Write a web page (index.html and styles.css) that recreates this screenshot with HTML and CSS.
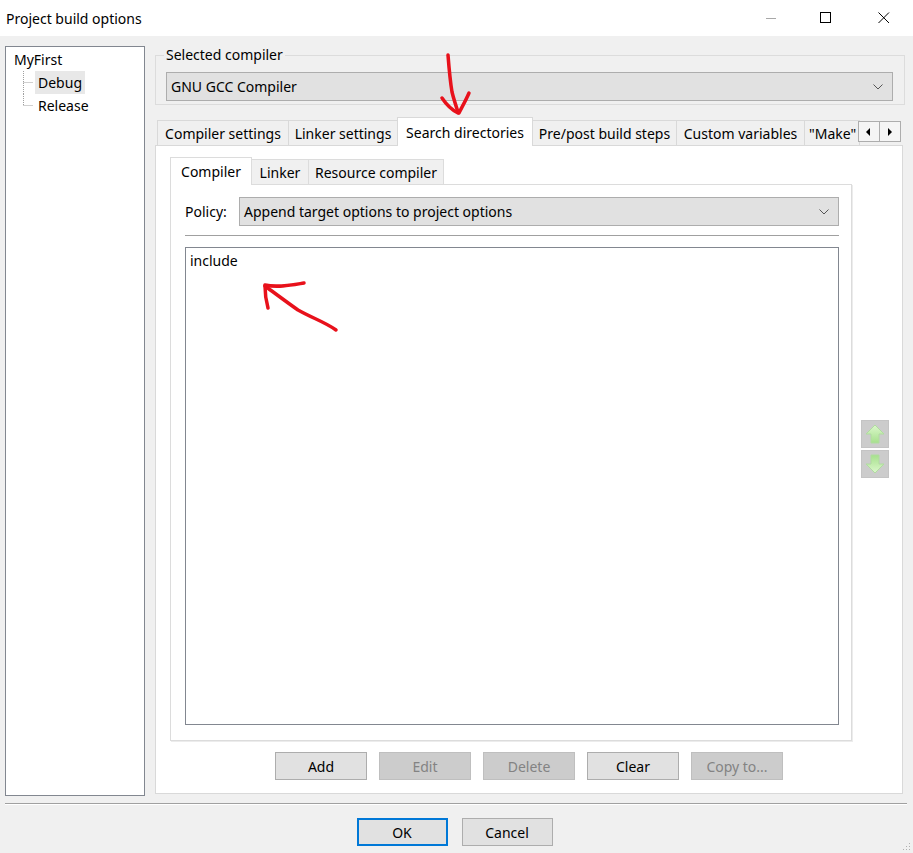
FILE: index.html
```html
<!DOCTYPE html>
<html>
<head>
<meta charset="utf-8">
<title>Project build options</title>
<link rel="stylesheet" href="styles.css">
</head>
<body>
<div class="titlebar">
  <span class="title">Project build options</span>
  <div class="controls">
    <span class="ctl"><svg width="12" height="12" viewBox="0 0 12 12"><line x1="1" y1="6.5" x2="11" y2="6.5" stroke="#a8a8a8" stroke-width="1"/></svg></span>
    <span class="ctl"><svg width="12" height="12" viewBox="0 0 12 12"><rect x="0.5" y="0.5" width="10" height="10" fill="none" stroke="#000" stroke-width="1"/></svg></span>
    <span class="ctl"><svg width="12" height="12" viewBox="0 0 12 12"><path d="M0.5 0.5 L11 11 M11 0.5 L0.5 11" stroke="#000" stroke-width="1" fill="none"/></svg></span>
  </div>
</div>

<div class="main">
  <div class="tree">
    <div class="row root"><span class="label">MyFirst</span></div>
    <div class="row child">
      <svg class="branch" width="15" height="23" viewBox="0 0 15 23"><path d="M5.5 0 V23 M5.5 11.5 H15" stroke="#a0a0a0" stroke-dasharray="1 1" fill="none"/></svg>
      <span class="label sel">Debug</span>
    </div>
    <div class="row child">
      <svg class="branch" width="15" height="23" viewBox="0 0 15 23"><path d="M5.5 0 V12 M5.5 11.5 H15" stroke="#a0a0a0" stroke-dasharray="1 1" fill="none"/></svg>
      <span class="label">Release</span>
    </div>
  </div>

  <div class="right">
    <fieldset class="group">
      <legend>Selected compiler</legend>
      <div class="combo">
        <span>GNU GCC Compiler</span>
        <svg class="chev" width="10" height="6" viewBox="0 0 10 6"><path d="M0.5 0.5 L5 5 L9.5 0.5" stroke="#555" fill="none"/></svg>
      </div>
    </fieldset>

    <div class="tabs">
      <div class="tab w1">Compiler settings</div>
      <div class="tab w2">Linker settings</div>
      <div class="tab w3 sel">Search directories</div>
      <div class="tab w4">Pre/post build steps</div>
      <div class="tab w5">Custom variables</div>
      <div class="tab w6">"Make"</div>
      <div class="tabscroll">
        <span class="sbtn"><svg width="6" height="8" viewBox="0 0 6 8"><path d="M4 0 L0 4 L4 8 Z" fill="#000"/></svg></span>
        <span class="sbtn"><svg width="6" height="8" viewBox="0 0 6 8"><path d="M1 0 L5 4 L1 8 Z" fill="#000"/></svg></span>
      </div>
    </div>

    <div class="tabpanel">
      <div class="top">
        <div class="inner">
          <div class="subtabs">
            <div class="subtab s1 sel">Compiler</div>
            <div class="subtab s2">Linker</div>
            <div class="subtab s3">Resource compiler</div>
          </div>
          <div class="subpanel">
            <div class="policy">
              <span class="plabel">Policy:</span>
              <div class="combo wide">
                <span>Append target options to project options</span>
                <svg class="chev" width="10" height="6" viewBox="0 0 10 6"><path d="M0.5 0.5 L5 5 L9.5 0.5" stroke="#555" fill="none"/></svg>
              </div>
            </div>
            <div class="etch"></div>
            <div class="list">
              <div class="item">include</div>
            </div>
          </div>
        </div>
        <div class="side">
          <span class="mv">
            <svg width="28" height="28" viewBox="0 0 28 28">
              <defs><linearGradient id="g1" x1="0" y1="0" x2="0" y2="1"><stop offset="0" stop-color="#dcf8cc"/><stop offset="1" stop-color="#a6e08c"/></linearGradient></defs>
              <polygon points="14,5 23,14 18,14 18,23 10,23 10,14 5,14" fill="url(#g1)" stroke="#b0dca0" stroke-width="1"/>
            </svg>
          </span>
          <span class="mv">
            <svg width="28" height="28" viewBox="0 0 28 28">
              <defs><linearGradient id="g2" x1="0" y1="0" x2="0" y2="1"><stop offset="0" stop-color="#a6e08c"/><stop offset="1" stop-color="#dcf8cc"/></linearGradient></defs>
              <polygon points="14,23 23,14 18,14 18,5 10,5 10,14 5,14" fill="url(#g2)" stroke="#b0dca0" stroke-width="1"/>
            </svg>
          </span>
        </div>
      </div>
      <div class="btnrow">
        <span class="btn">Add</span>
        <span class="btn dis">Edit</span>
        <span class="btn dis">Delete</span>
        <span class="btn">Clear</span>
        <span class="btn dis">Copy to...</span>
      </div>
    </div>
  </div>
</div>

<div class="sep"></div>
<div class="footer">
  <span class="btn def">OK</span>
  <span class="btn">Cancel</span>
</div>

<svg class="grip" width="8" height="8" viewBox="0 0 8 8"><g fill="#b0b0b0"><rect x="6" y="0" width="1" height="1"/><rect x="6" y="3" width="1" height="1"/><rect x="3" y="3" width="1" height="1"/><rect x="6" y="6" width="1" height="1"/><rect x="3" y="6" width="1" height="1"/><rect x="0" y="6" width="1" height="1"/></g></svg>

<svg class="annot" width="913" height="853" viewBox="0 0 913 853">
  <g stroke="#e8111b" stroke-width="3.5" fill="none" stroke-linecap="round" stroke-linejoin="round">
    <path d="M448 55 C449 68 450 80 452 92 C454 100 456 106 458 112"/>
    <path d="M442 98 C446 104 452 110 458 113"/>
    <path d="M469 93 C466 100 462 107 459 113"/>
    <path d="M336 330 C325 322 312 318 298 310 C288 303 276 294 265 286"/>
    <path d="M265 285 C278 288 292 285 304 283"/>
    <path d="M265 286 C265 294 266 301 268 308"/>
  </g>
</svg>
</body>
</html>
```
FILE: styles.css
```css
* { box-sizing: border-box; }
html, body { margin: 0; padding: 0; }
body {
  width: 913px;
  height: 853px;
  background: #f0f0f0;
  font-family: "Noto Sans", "Open Sans", sans-serif;
  font-size: 14px;
  color: #000;
  overflow: hidden;
  position: relative;
}

/* Title bar */
.titlebar {
  height: 36px;
  background: #fff;
  display: flex;
  align-items: center;
  justify-content: space-between;
  padding-left: 6px;
}
.title { font-size: 14px; }
.controls { display: flex; height: 100%; }
.ctl { width: 58px; display: flex; align-items: center; justify-content: center; }
.ctl:first-child { padding-left: 5px; }

/* Main area */
.main { display: flex; padding: 10px 0 0 5px; }
.tree {
  width: 140px;
  height: 750px;
  background: #fff;
  border: 1px solid #828790;
  padding-top: 1px;
}
.row { display: flex; align-items: center; height: 23px; }
.row.root { padding-left: 8px; }
.row.child { padding-left: 12px; }
.branch { flex: none; }
.label { line-height: 23px; padding: 0 3px; margin-left: 2px; }
.row.root .label { padding: 0; margin-left: 0; }
.label.sel { background: #e8e8e8; }

.right { margin-left: 10px; width: 750px; }

.group {
  margin: 0;
  width: 750px;
  border: 1px solid #dcdcdc;
  padding: 8px 11px 3px 10px;
}
.group legend {
  padding: 0 2px;
  margin-left: -2px;
  line-height: 18px;
}
.combo {
  height: 29px;
  background: #e1e1e1;
  border: 1px solid #adadad;
  display: flex;
  align-items: center;
  justify-content: space-between;
  padding: 0 9px 0 4px;
}
.chev { flex: none; }

/* Tabs */
.tabs {
  display: flex;
  align-items: flex-end;
  height: 28px;
  margin-top: 12px;
  padding-left: 3px;
}
.tab {
  flex: none;
  height: 25px;
  border: 1px solid #d9d9d9;
  border-bottom: none;
  background: #f0f0f0;
  margin-left: -1px;
  display: flex;
  align-items: center;
  justify-content: center;
  white-space: nowrap;
}
.tab.sel {
  height: 29px;
  margin-bottom: -1px;
  background: #fff;
  position: relative;
  z-index: 1;
}
.w1 { width: 132px; }
.w2 { width: 110px; }
.w3 { width: 136px; }
.w4 { width: 145px; }
.w5 { width: 129px; }
.w6 { width: 56px; justify-content: flex-start; padding-left: 4px; }
.tabscroll {
  display: flex;
  align-self: flex-start;
  margin-top: 4px;
  margin-left: -1px;
}
.sbtn {
  width: 22px;
  height: 21px;
  border: 1px solid #adadad;
  background: #f5f5f5;
  display: flex;
  align-items: center;
  justify-content: center;
  margin-left: -1px;
}

.tabpanel {
  width: 748px;
  height: 649px;
  border: 1px solid #d9d9d9;
  background: #fff;
  display: flex;
  flex-direction: column;
}
.top { display: flex; padding: 11px 0 0 14px; }
.inner { width: 682px; }
.subtabs { display: flex; align-items: flex-end; height: 27px; }
.subtab {
  flex: none;
  height: 25px;
  border: 1px solid #dcdcdc;
  border-bottom: none;
  background: #f0f0f0;
  margin-left: -1px;
  display: flex;
  align-items: center;
  justify-content: center;
  white-space: nowrap;
}
.subtab:first-child { margin-left: 0; }
.subtab.sel {
  height: 28px;
  margin-bottom: -1px;
  background: #fff;
  position: relative;
  z-index: 1;
}
.s1 { width: 82px; }
.s2 { width: 58px; }
.s3 { width: 136px; }
.subpanel {
  height: 557px;
  border: 1px solid #dcdcdc;
  box-shadow: 1px 1px 0 #ececec;
  padding: 12px 12px 0 14px;
}
.policy { display: flex; align-items: center; }
.plabel { width: 54px; flex: none; }
.combo.wide { flex: 1; }
.etch { height: 1px; background: #a0a0a0; margin-top: 9px; }
.list {
  margin-top: 11px;
  height: 478px;
  border: 1px solid #828790;
  background: #fff;
  padding: 3px 4px;
}
.item { line-height: 19px; }

.side {
  flex: 1;
  display: flex;
  flex-direction: column;
  justify-content: center;
  padding-left: 9px;
  gap: 2px;
}
.mv {
  width: 28px;
  height: 28px;
  background: #cccccc;
  border: 1px solid #c4c4c4;
  display: block;
}
.mv svg { display: block; margin: -1px; }

.btnrow {
  display: flex;
  justify-content: center;
  gap: 12px;
  margin-top: 11px;
}
.btn {
  width: 92px;
  height: 28px;
  border: 1px solid #adadad;
  background: #e1e1e1;
  display: flex;
  align-items: center;
  justify-content: center;
}
.btn.dis {
  background: #cccccc;
  border-color: #bfbfbf;
  color: #838383;
}

.sep {
  margin: 7px 6px 0 5px;
  border-top: 1px solid #a0a0a0;
  border-bottom: 1px solid #fff;
}
.footer {
  display: flex;
  justify-content: center;
  gap: 14px;
  margin-top: 13px;
  padding-right: 4px;
}
.footer .btn { width: 91px; }
.btn.def { border: 2px solid #0078d7; }

.grip { position: absolute; right: 2px; bottom: 2px; }
.annot { position: absolute; left: 0; top: 0; pointer-events: none; }
```
